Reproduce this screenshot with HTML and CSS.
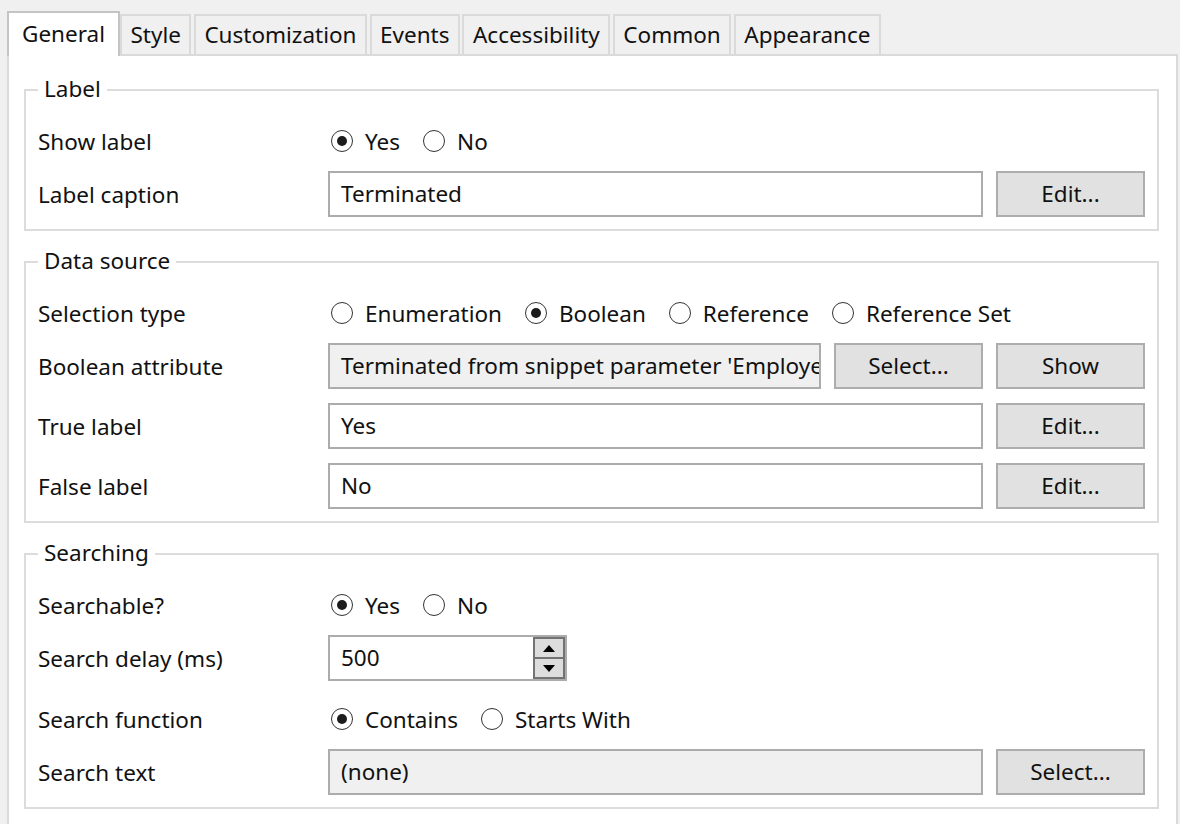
FILE: index.html
```html
<!DOCTYPE html>
<html>
<head>
<meta charset="utf-8">
<link rel="stylesheet" href="styles.css">
</head>
<body>
<div class="page">
  <div class="tabs">
    <div class="tab selected">General</div>
    <div class="tab">Style</div>
    <div class="tab">Customization</div>
    <div class="tab">Events</div>
    <div class="tab">Accessibility</div>
    <div class="tab">Common</div>
    <div class="tab">Appearance</div>
  </div>
  <div class="panel">
    <div class="group">
      <div class="legend">Label</div>
      <div class="row radio-row">
        <div class="lbl">Show label</div>
        <div class="ctrl">
          <span class="radio checked"></span><span class="rtext">Yes</span>
          <span class="radio"></span><span class="rtext">No</span>
        </div>
      </div>
      <div class="row">
        <div class="lbl">Label caption</div>
        <div class="ctrl">
          <div class="input">Terminated</div>
          <div class="btn">Edit...</div>
        </div>
      </div>
    </div>

    <div class="group">
      <div class="legend">Data source</div>
      <div class="row radio-row">
        <div class="lbl">Selection type</div>
        <div class="ctrl">
          <span class="radio"></span><span class="rtext">Enumeration</span>
          <span class="radio checked"></span><span class="rtext">Boolean</span>
          <span class="radio"></span><span class="rtext">Reference</span>
          <span class="radio"></span><span class="rtext">Reference Set</span>
        </div>
      </div>
      <div class="row">
        <div class="lbl">Boolean attribute</div>
        <div class="ctrl">
          <div class="input readonly">Terminated from snippet parameter 'Employee'</div>
          <div class="btn">Select...</div>
          <div class="btn">Show</div>
        </div>
      </div>
      <div class="row">
        <div class="lbl">True label</div>
        <div class="ctrl">
          <div class="input">Yes</div>
          <div class="btn">Edit...</div>
        </div>
      </div>
      <div class="row">
        <div class="lbl">False label</div>
        <div class="ctrl">
          <div class="input">No</div>
          <div class="btn">Edit...</div>
        </div>
      </div>
    </div>

    <div class="group">
      <div class="legend">Searching</div>
      <div class="row radio-row">
        <div class="lbl">Searchable?</div>
        <div class="ctrl">
          <span class="radio checked"></span><span class="rtext">Yes</span>
          <span class="radio"></span><span class="rtext">No</span>
        </div>
      </div>
      <div class="row spin-row">
        <div class="lbl">Search delay (ms)</div>
        <div class="ctrl">
          <div class="spin">
            <div class="spin-val">500</div>
            <div class="spin-btns">
              <div class="spin-btn"><span class="tri up"></span></div>
              <div class="spin-btn"><span class="tri down"></span></div>
            </div>
          </div>
        </div>
      </div>
      <div class="row radio-row">
        <div class="lbl">Search function</div>
        <div class="ctrl">
          <span class="radio checked"></span><span class="rtext">Contains</span>
          <span class="radio"></span><span class="rtext">Starts With</span>
        </div>
      </div>
      <div class="row">
        <div class="lbl">Search text</div>
        <div class="ctrl">
          <div class="input readonly">(none)</div>
          <div class="btn">Select...</div>
        </div>
      </div>
    </div>
  </div>
</div>
</body>
</html>
```

FILE: styles.css
```css
html, body {
  margin: 0;
  padding: 0;
  background: #f0f0f0;
}
body {
  font-family: "Noto Sans", "Open Sans", sans-serif;
  font-size: 22.5px;
  color: #111;
  width: 1180px;
  height: 824px;
  overflow: hidden;
}
.page {
  padding: 11px 2px 0 7px;
}
.tabs {
  display: flex;
  align-items: flex-end;
  height: 43px;
  position: relative;
  z-index: 2;
}
.tab {
  height: 38px;
  line-height: 38px;
  padding: 0 8.5px;
  border: 2px solid #dadada;
  border-bottom: none;
  background: #f0f0f0;
  margin-left: 2.5px;
  white-space: nowrap;
}
.tab.selected {
  height: 43px;
  line-height: 42px;
  padding: 0 13px;
  margin-left: 0;
  margin-bottom: -2px;
  background: #fff;
  border-color: #c4c4c4;
}
.tab.selected + .tab {
  margin-left: 0;
}
.panel {
  background: #fff;
  border: 2px solid #dadada;
  border-bottom: none;
  padding: 33px 17px 20px 15px;
  position: relative;
  z-index: 1;
}
.group {
  position: relative;
  border: 2px solid #dcdcdc;
  padding: 34px 12px 12px 12px;
  margin-bottom: 30px;
  display: flex;
  flex-direction: column;
  gap: 14px;
}
.group:last-child {
  margin-bottom: 0;
}
.legend {
  position: absolute;
  left: 12px;
  top: -17px;
  padding: 0 6px;
  background: #fff;
  line-height: 30px;
}
.row {
  display: grid;
  grid-template-columns: 290px minmax(0, 1fr);
  align-items: center;
  height: 46px;
}
.radio-row {
  height: 32px;
}
.spin-row {
  margin-bottom: 8px;
}
.lbl {
  white-space: nowrap;
}
.ctrl {
  display: flex;
  align-items: center;
  gap: 13px;
  height: 100%;
  min-width: 0;
}
.radio-row .ctrl {
  gap: 0;
}
.radio {
  box-sizing: border-box;
  width: 22px;
  height: 22px;
  border: 1.6px solid #333;
  border-radius: 50%;
  margin-left: 3px;
  display: flex;
  align-items: center;
  justify-content: center;
  flex: none;
}
.radio.checked::after {
  content: "";
  width: 10px;
  height: 10px;
  border-radius: 50%;
  background: #1c1c1c;
}
.rtext {
  margin-left: 12px;
  margin-right: 20px;
  white-space: nowrap;
}
.input {
  box-sizing: border-box;
  flex: 1 1 0;
  min-width: 0;
  height: 46px;
  border: 2px solid #acacac;
  background: #fff;
  padding: 0 11px;
  line-height: 42px;
  white-space: nowrap;
  overflow: hidden;
}
.input.readonly {
  background: #f0f0f0;
}
.btn {
  box-sizing: border-box;
  width: 149px;
  height: 46px;
  flex: none;
  border: 2px solid #adadad;
  background: #e1e1e1;
  text-align: center;
  line-height: 42px;
}
.spin {
  box-sizing: border-box;
  width: 239px;
  height: 46px;
  border: 2px solid #acacac;
  display: flex;
}
.spin-val {
  flex: 1;
  padding: 0 11px;
  line-height: 42px;
}
.spin-btns {
  width: 32px;
  display: flex;
  flex-direction: column;
}
.spin-btn {
  box-sizing: border-box;
  flex: 1;
  background: #dddddd;
  border: 2px solid #737373;
  display: flex;
  align-items: center;
  justify-content: center;
}
.spin-btn + .spin-btn {
  border-top: none;
}
.tri {
  width: 0;
  height: 0;
  border-left: 6px solid transparent;
  border-right: 6px solid transparent;
}
.tri.up {
  border-bottom: 7px solid #000;
}
.tri.down {
  border-top: 7px solid #000;
}
```
